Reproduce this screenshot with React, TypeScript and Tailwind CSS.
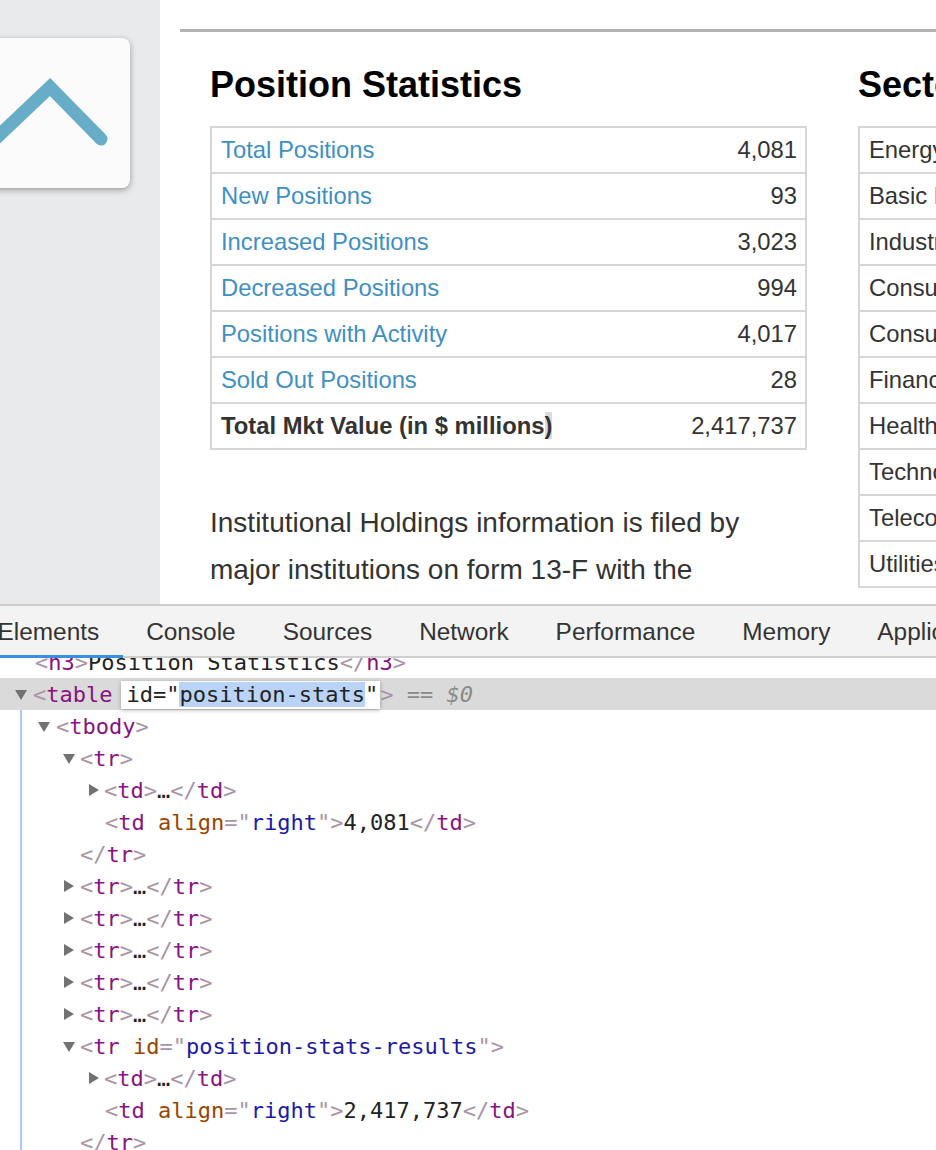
import React from "react";

const positionRows = [
  { label: "Total Positions", value: "4,081" },
  { label: "New Positions", value: "93" },
  { label: "Increased Positions", value: "3,023" },
  { label: "Decreased Positions", value: "994" },
  { label: "Positions with Activity", value: "4,017" },
  { label: "Sold Out Positions", value: "28" },
];

const sectors = [
  "Energy",
  "Basic Materials",
  "Industrials",
  "Consumer Cyclicals",
  "Consumer Non-Cyclicals",
  "Financials",
  "Healthcare",
  "Technology",
  "Telecommunications",
  "Utilities",
];

const tabs = ["Elements", "Console", "Sources", "Network", "Performance", "Memory", "Application"];

const Tri = ({ open }: { open?: boolean }) => (
  <svg width="12" height="12" viewBox="0 0 12 12" className="shrink-0">
    {open ? (
      <polygon points="0,2 12,2 6,12" fill="#727272" />
    ) : (
      <polygon points="1,0 11,6 1,12" fill="#727272" />
    )}
  </svg>
);

const Lt = ({ c = "<" }: { c?: string }) => <span className="text-[#a894a6]">{c}</span>;
const Tag = ({ n }: { n: string }) => <span className="text-[#881280]">{n}</span>;
const Attr = ({ n }: { n: string }) => <span className="text-[#994500]">{n}</span>;
const Val = ({ v }: { v: string }) => (
  <>
    <span className="text-[#a894a6]">="</span>
    <span className="text-[#1a1aa6]">{v}</span>
    <span className="text-[#a894a6]">"</span>
  </>
);

const Line = ({
  tri,
  triX = 0,
  textX,
  open,
  selected,
  children,
}: {
  tri?: boolean;
  triX?: number;
  textX: number;
  open?: boolean;
  selected?: boolean;
  children: React.ReactNode;
}) => (
  <div className={`flex h-[32px] items-center whitespace-pre ${selected ? "bg-[#dadada]" : ""}`}>
    {tri ? (
      <>
        <div style={{ width: triX }} className="shrink-0" />
        <Tri open={open} />
        <div style={{ width: textX - triX - 12 }} className="shrink-0" />
      </>
    ) : (
      <div style={{ width: textX }} className="shrink-0" />
    )}
    <span>{children}</span>
  </div>
);

const Collapsed = ({ n }: { n: string }) => (
  <>
    <Lt />
    <Tag n={n} />
    <Lt c=">" />
    <span className="text-[#222]">…</span>
    <Lt c="</" />
    <Tag n={n} />
    <Lt c=">" />
  </>
);

const Sidebar = () => (
  <div className="w-[160px] shrink-0 bg-[#e9eaec] pt-[38px]">
    <div className="-ml-[40px] h-[150px] w-[170px] rounded-[8px] bg-[#fbfbfb] shadow-[0_2px_6px_rgba(0,0,0,0.35)]">
      <svg width="170" height="150" viewBox="0 0 170 150">
        <polyline
          points="30,106 90,49 141,101"
          fill="none"
          stroke="#67adc8"
          strokeWidth="13"
          strokeLinecap="round"
          strokeLinejoin="miter"
        />
      </svg>
    </div>
  </div>
);

const PositionTable = () => (
  <div className="border-2 border-[#d6d6d6]">
    {positionRows.map((row) => (
      <div
        key={row.label}
        className="flex h-[46px] items-center justify-between border-b-2 border-[#d6d6d6] pl-[9px] pr-[8px]"
      >
        <a className="text-[#3f8fc2]">{row.label}</a>
        <span className="text-[#333]">{row.value}</span>
      </div>
    ))}
    <div className="flex h-[44px] items-center justify-between pl-[9px] pr-[8px]">
      <span className="font-bold text-[#333]">
        Total Mkt Value (in $ millions<span className="bg-[#dcdcdc]">)</span>
      </span>
      <span className="text-[#333]">2,417,737</span>
    </div>
  </div>
);

const SectorTable = () => (
  <div className="border-2 border-[#d6d6d6]">
    {sectors.map((s, i) => (
      <div
        key={s}
        className={`flex items-center whitespace-nowrap pl-[9px] text-[#333] ${
          i < sectors.length - 1 ? "h-[46px] border-b-2 border-[#d6d6d6]" : "h-[44px]"
        }`}
      >
        {s}
      </div>
    ))}
  </div>
);

const Page = () => (
  <div className="flex h-[604px] overflow-hidden">
    <Sidebar />
    <div className="min-w-0 flex-1 overflow-hidden bg-white pl-[20px] pt-[29px]">
      <div className="h-[3px] w-[900px] bg-[#b3b3b3]" />
      <div className="flex gap-[51px] pl-[30px] pt-[35px]">
        <div className="w-[597px] shrink-0">
          <h3 className="h-[36px] text-[36px] font-bold leading-none text-black">
            Position Statistics
          </h3>
          <div className="mt-[23px] text-[23.8px]">
            <PositionTable />
          </div>
          <p className="mt-[49px] text-[28px] leading-[47px] text-[#333]">
            Institutional Holdings information is filed by major institutions on form 13-F with the
            Securities and Exchange Commission.
          </p>
        </div>
        <div className="w-[320px] shrink-0">
          <h3 className="h-[36px] whitespace-nowrap text-[36px] font-bold leading-none text-black">
            Sector Allocation
          </h3>
          <div className="mt-[23px] text-[23.8px]">
            <SectorTable />
          </div>
        </div>
      </div>
    </div>
  </div>
);

const DevTools = () => (
  <div className="flex flex-1 flex-col overflow-hidden border-t-2 border-[#cbcbcb] bg-white">
    <div className="flex h-[52px] shrink-0 border-b-2 border-[#cfcfcf] bg-[#f3f3f3] text-[24.4px] text-[#333]">
      <div className="-ml-[26px] flex">
        {tabs.map((t, i) => (
          <div
            key={t}
            className={`flex h-[52px] items-center whitespace-nowrap px-[23.5px] ${
              i === 0 ? "border-b-[3px] border-[#3b8ee0] pt-[3px]" : ""
            }`}
          >
            {t}
          </div>
        ))}
      </div>
    </div>
    <div className="relative flex-1 overflow-hidden font-['DejaVu_Sans_Mono',monospace] text-[22px] text-[#222]">
      <div className="absolute bottom-0 left-[20px] top-[52px] w-[2px] bg-[#a9c8f0]" />
      <div className="-mt-[12px]">
        <Line textX={35}>
          <Lt />
          <Tag n="h3" />
          <Lt c=">" />
          Position Statistics
          <Lt c="</" />
          <Tag n="h3" />
          <Lt c=">" />
        </Line>
        <Line tri open triX={15} textX={33} selected>
          <Lt />
          <Tag n="table" />
          <span className="ml-[9px] inline-block bg-white pl-[5px] pr-[2px] leading-[28px] shadow-[0_1px_4px_rgba(0,0,0,0.3)]">
            <span className="text-[#222]">id="</span>
            <span className="bg-[#bad4f7]">position-stats</span>
            <span className="text-[#222]">"</span>
          </span>
          <Lt c=">" />
          <span className="text-[#8a8a8a]"> == </span>
          <span className="italic text-[#8a8a8a]">$0</span>
        </Line>
        <Line tri open triX={38} textX={56}>
          <Lt />
          <Tag n="tbody" />
          <Lt c=">" />
        </Line>
        <Line tri open triX={63} textX={80}>
          <Lt />
          <Tag n="tr" />
          <Lt c=">" />
        </Line>
        <Line tri triX={88} textX={104}>
          <Collapsed n="td" />
        </Line>
        <Line textX={105}>
          <Lt />
          <Tag n="td" />
          <span> </span>
          <Attr n="align" />
          <Val v="right" />
          <Lt c=">" />
          4,081
          <Lt c="</" />
          <Tag n="td" />
          <Lt c=">" />
        </Line>
        <Line textX={80}>
          <Lt c="</" />
          <Tag n="tr" />
          <Lt c=">" />
        </Line>
        {[0, 1, 2, 3, 4].map((i) => (
          <Line key={i} tri triX={63} textX={80}>
            <Collapsed n="tr" />
          </Line>
        ))}
        <Line tri open triX={63} textX={80}>
          <Lt />
          <Tag n="tr" />
          <span> </span>
          <Attr n="id" />
          <Val v="position-stats-results" />
          <Lt c=">" />
        </Line>
        <Line tri triX={88} textX={104}>
          <Collapsed n="td" />
        </Line>
        <Line textX={105}>
          <Lt />
          <Tag n="td" />
          <span> </span>
          <Attr n="align" />
          <Val v="right" />
          <Lt c=">" />
          2,417,737
          <Lt c="</" />
          <Tag n="td" />
          <Lt c=">" />
        </Line>
        <Line textX={80}>
          <Lt c="</" />
          <Tag n="tr" />
          <Lt c=">" />
        </Line>
      </div>
    </div>
  </div>
);

export default function App() {
  return (
    <div className="flex h-[1150px] w-[936px] flex-col overflow-hidden bg-white font-['Liberation_Sans',Arial,sans-serif]">
      <Page />
      <DevTools />
    </div>
  );
}
